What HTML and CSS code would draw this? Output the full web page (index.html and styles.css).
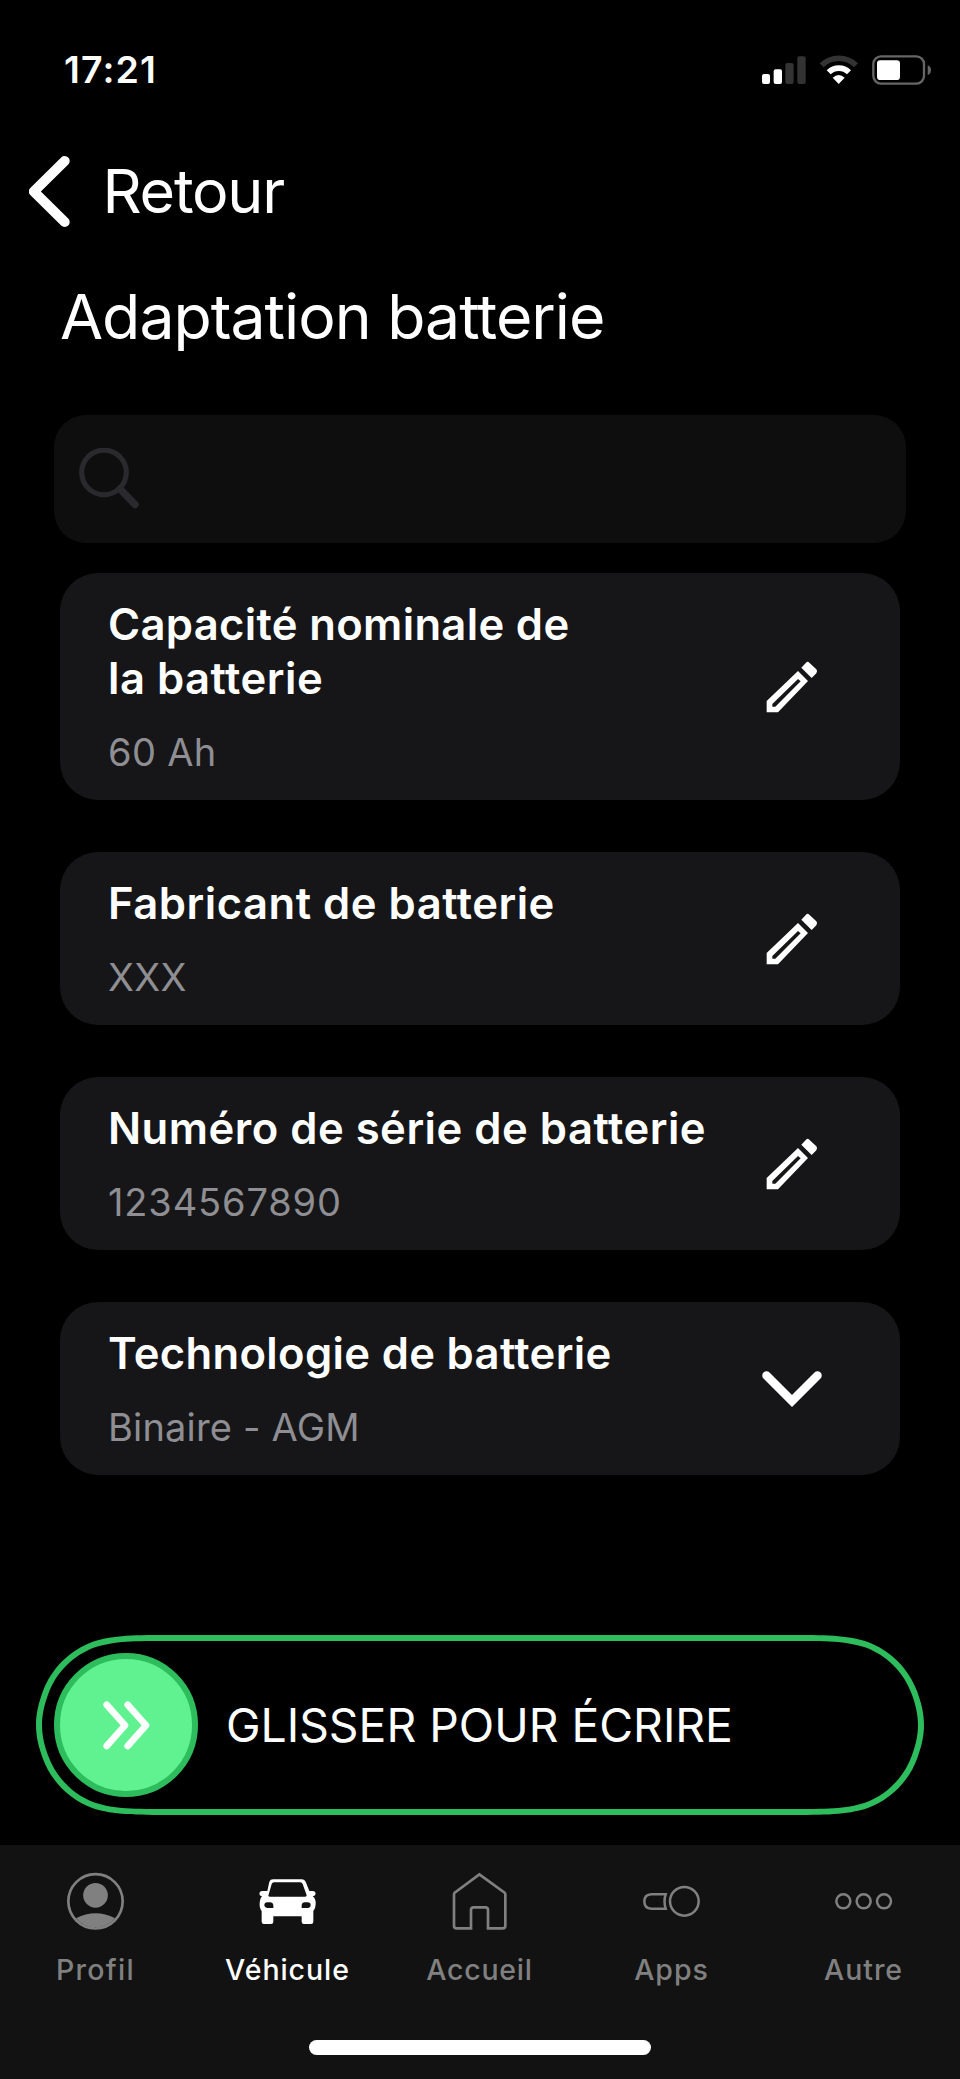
FILE: index.html
```html
<!DOCTYPE html>
<html lang="fr">
<head>
<meta charset="utf-8">
<title>Adaptation batterie</title>
<link rel="stylesheet" href="styles.css">
</head>
<body>
<svg width="0" height="0" class="defs">
  <symbol id="pencil" viewBox="618 303 156 156">
    <path fill-rule="evenodd" d="M714 333 744 363 654 457H620V423ZM714 357 637 432V440H646L722 364Z"/>
    <path d="M724 323 738 308Q743 303 748 308L769 328Q774 334 769 340L755 354Z"/>
  </symbol>
</svg>
<div class="screen">
  <div class="status">
    <span class="time">17:21</span>
    <svg class="status-icons" viewBox="120 72 516 96">
      <rect x="126" y="132" width="24" height="30" rx="6" fill="#fff"/>
      <rect x="161" y="118" width="25" height="44" rx="6" fill="#fff"/>
      <rect x="196" y="99" width="25" height="63" rx="6" fill="#333"/>
      <rect x="232" y="79" width="25" height="83" rx="6" fill="#333"/>
      <path d="M305 106A73 73 0 0 1 408 106" fill="none" stroke="#333" stroke-width="17"/>
      <path d="M326 127A43 43 0 0 1 387 127" fill="none" stroke="#fff" stroke-width="17"/>
      <path d="M338 143Q356 127 374 143L356 162Z" fill="#fff"/>
      <rect x="460" y="79" width="152" height="82" rx="23" fill="none" stroke="#666" stroke-width="7"/>
      <rect x="471" y="91" width="69" height="59" rx="10" fill="#fff"/>
      <path d="M623 106Q633 110 633 120.500T623 135Z" fill="#666"/>
    </svg>
  </div>

  <header class="nav">
    <svg class="back" viewBox="0 0 42 72"><path d="M35.700 6 4.800 36.500 35.700 67" fill="none" stroke="#fff" stroke-width="10" stroke-linecap="round" stroke-linejoin="round"/></svg>
    <span class="nav-label">Retour</span>
  </header>
  <h1 class="title">Adaptation batterie</h1>

  <div class="search">
    <svg class="search-icon" viewBox="0 0 62 62" fill="none" stroke="#2a2a2e">
      <circle cx="25" cy="24.500" r="22.300" stroke-width="5.200"/>
      <path d="M41 41 56 56.500" stroke-width="7.500" stroke-linecap="round"/>
    </svg>
  </div>

  <main class="cards">
    <section class="card">
      <div class="card-text"><h2 class="name"><span class="name-tight">Capacité nominale de</span><br>la batterie</h2><p class="value">60 Ah</p></div>
      <svg class="edit"><use href="#pencil"/></svg>
    </section>
    <section class="card">
      <div class="card-text"><h2 class="name">Fabricant de batterie</h2><p class="value">XXX</p></div>
      <svg class="edit"><use href="#pencil"/></svg>
    </section>
    <section class="card">
      <div class="card-text"><h2 class="name">Numéro de série de batterie</h2><p class="value digits">1234567890</p></div>
      <svg class="edit"><use href="#pencil"/></svg>
    </section>
    <section class="card">
      <div class="card-text"><h2 class="name name-tight">Technologie de batterie</h2><p class="value value-tight">Binaire - AGM</p></div>
      <svg class="expand" viewBox="0 0 60 36"><path d="M4.500 4.500 30 30 55.500 4.500" fill="none" stroke="#fff" stroke-width="8.500" stroke-linecap="round"/></svg>
    </section>
  </main>

  <div class="slider">
    <svg class="slider-frame" viewBox="0 0 888 180">
      <path fill="#2dbd5c" fill-rule="evenodd" d="M137.600 0H750.400C790 0 809.800 0 831.200 6.700C854.400 15.200 872.800 33.600 881.300 56.800C885.200 68 888 78 888 90C888 102 885.200 112 881.300 123.200C872.800 146.400 854.400 164.800 831.200 173.300C809.800 180 790 180 750.400 180H137.600C98 180 78.200 180 56.800 173.300C33.600 164.800 15.200 146.400 6.700 123.200C2.800 112 0 102 0 90C0 78 2.800 68 6.700 56.800C15.200 33.600 33.600 15.200 56.800 6.700C78.200 0 98 0 137.600 0ZM134.400 6C97.400 6 78.900 6 59 12.300C37.300 20.200 20.200 37.300 12.300 59C8.600 69 6 79 6 90C6 101 8.600 111 12.300 121C20.200 142.700 37.300 159.800 59 167.700C78.900 174 97.400 174 134.400 174H753.600C790.600 174 809.100 174 829 167.700C850.700 159.800 867.800 142.700 875.700 121C879.400 111 882 101 882 90C882 79 879.400 69 875.700 59C867.800 37.300 850.700 20.200 829 12.300C809.100 6 790.600 6 753.600 6Z"/>
    </svg>
    <div class="knob">
      <svg class="chevrons" viewBox="245 269 146 152" fill="none" stroke="#fff" stroke-width="20" stroke-linecap="round" stroke-linejoin="round"><path d="M259 283 314 345 259 407M322 283 377 345 322 407"/></svg>
    </div>
    <span class="slider-label">GLISSER POUR ÉCRIRE</span>
  </div>

  <footer class="tabbar">
    <nav class="tabs">
      <div class="tab">
        <svg class="tab-icon" viewBox="201 96 174 174">
          <circle cx="286.500" cy="184" r="81.500" fill="none" stroke="#808080" stroke-width="8"/>
          <circle cx="286.500" cy="166" r="37" fill="#808080"/>
          <path d="M228 235Q287 205 345 235Q322 262 286.500 262T228 235Z" fill="#808080"/>
        </svg>
        <span class="tab-label tab-label-wide">Profil</span>
      </div>
      <div class="tab active">
        <svg class="tab-icon" viewBox="27 21 174 174">
          <path fill="#fff" fill-rule="evenodd" d="M69 43H155Q163 43 167 50L178 78H189Q197 79 197 86Q196 93 188 94Q198 101 197 118Q197 130 190 138V170Q190 177 183 177H162Q155 177 155 170V154H70V170Q70 177 63 177H42Q35 177 35 170V138Q28 130 29 115Q30 100 36 94Q28 93 28 86Q28 79 36 78H52L58 50Q61 43 69 43ZM72 52Q67 52 65 57L55 92Q56 95 60 95H165Q171 95 170 91L158 57Q156 52 151 52ZM52 112Q43 113 43 120T52 129H70V121Q69 112 60 112ZM164 112Q156 112 155 121V129H173Q182 128 182 120T173 112Z"/>
        </svg>
        <span class="tab-label">Véhicule</span>
      </div>
      <div class="tab">
        <svg class="tab-icon" viewBox="33 21 174 174">
          <path d="M118 28 194 83Q196 85 196 89V182Q196 190 188 190H144V135Q144 127 136 127H101Q93 127 93 135V190H50Q42 190 42 182V89Q42 85 44 83Z" fill="none" stroke="#808080" stroke-width="8"/>
        </svg>
        <span class="tab-label tab-label-tight">Accueil</span>
      </div>
      <div class="tab">
        <svg class="tab-icon" viewBox="489 96 174 174" fill="none" stroke="#808080" stroke-width="7.500">
          <circle cx="613" cy="184" r="43"/>
          <path d="M557 163H514Q493 164 493 184.500T514 206H557Q550 184 557 163Z"/>
        </svg>
        <span class="tab-label">Apps</span>
      </div>
      <div class="tab">
        <svg class="tab-icon" viewBox="1065 96 174 174" fill="none" stroke="#808080" stroke-width="7.500">
          <circle cx="1090" cy="184" r="21"/><circle cx="1151" cy="184" r="21"/><circle cx="1212" cy="184" r="21"/>
        </svg>
        <span class="tab-label">Autre</span>
      </div>
    </nav>
    <div class="home-indicator"></div>
  </footer>
</div>
</body>
</html>
```
FILE: styles.css
```css
* { box-sizing: border-box; }
body {
  margin: 0;
  background: #000;
  color: #fff;
  font-family: Inter, "Liberation Sans", sans-serif;
}
h1, h2, p { margin: 0; }
svg { display: block; flex: none; }
.defs { position: absolute; }

.screen {
  width: 960px;
  height: 2079px;
  display: flex;
  flex-direction: column;
  background: #000;
  overflow: hidden;
}

.status {
  display: flex;
  justify-content: space-between;
  align-items: center;
  height: 40px;
  margin-top: 50px;
  padding: 0 28px 0 64px;
}
.time {
  font-size: 37.5px;
  font-weight: 600;
  line-height: 40px;
  letter-spacing: 1.1px;
}
.status-icons { width: 172px; height: 32px; }

.nav {
  display: flex;
  align-items: center;
  height: 76px;
  margin-top: 63px;
  padding-left: 29px;
}
.back { width: 42px; height: 72px; }
.nav-label {
  margin-left: 31.5px;
  font-size: 61px;
  line-height: 76px;
  letter-spacing: -1.25px;
}
.title {
  margin: 49px 0 0 60px;
  font-size: 62.5px;
  font-weight: 400;
  line-height: 76px;
  letter-spacing: -1px;
}

.search {
  display: flex;
  align-items: center;
  height: 128px;
  margin: 61px 54px 0;
  padding-left: 25px;
  border-radius: 32px;
  background: #0e0e0e;
}
.search-icon { width: 62px; height: 62px; }

.cards {
  display: flex;
  flex-direction: column;
  gap: 52px;
  margin: 30px 60px 0;
}
.card {
  display: flex;
  align-items: center;
  justify-content: space-between;
  padding: 25px 82px 25px 48px;
  border-radius: 38px;
  background: #161618;
}
.name {
  font-size: 43.6px;
  font-weight: 600;
  line-height: 54px;
  letter-spacing: 0.5px;
  white-space: nowrap;
}
.name-tight { letter-spacing: 0.32px; }
.value {
  margin-top: 23px;
  font-size: 38px;
  line-height: 46px;
  letter-spacing: 0.35px;
  color: #8e8e93;
}
.value-tight { letter-spacing: 0.18px; }
.digits { letter-spacing: 0.85px; }
.edit { width: 52px; height: 52px; fill: #fff; }
.expand { width: 60px; height: 36px; margin-right: -4px; }

.slider {
  position: relative;
  display: flex;
  align-items: center;
  height: 180px;
  margin: 160px 36px 0;
  padding-left: 18px;
}
.slider-frame {
  position: absolute;
  inset: 0;
  width: 888px;
  height: 180px;
}
.knob {
  display: flex;
  align-items: center;
  justify-content: center;
  width: 144px;
  height: 144px;
  border: 6px solid #2dbd5c;
  border-radius: 50%;
  background: #60f291;
}
.chevrons { width: 48.7px; height: 50.7px; }
.slider-label {
  margin-left: 28px;
  font-size: 46.3px;
  line-height: 56px;
}

.tabbar {
  flex: 1;
  margin-top: 30px;
  padding-top: 27px;
  background: #121212;
}
.tabs { display: grid; grid-template-columns: repeat(5, 1fr); }
.tab {
  display: flex;
  flex-direction: column;
  align-items: center;
  gap: 22px;
  color: #808080;
}
.active { color: #fff; }
.tab-icon { width: 58px; height: 58px; }
.tab-label {
  margin-right: 1px;
  font-size: 28.5px;
  font-weight: 500;
  line-height: 36px;
  letter-spacing: 0.95px;
}
.tab-label-wide { letter-spacing: 1.33px; }
.tab-label-tight { letter-spacing: 0.74px; }
.home-indicator {
  width: 342px;
  height: 15px;
  margin: 52px auto 0;
  border-radius: 8px;
  background: #fff;
}
```
